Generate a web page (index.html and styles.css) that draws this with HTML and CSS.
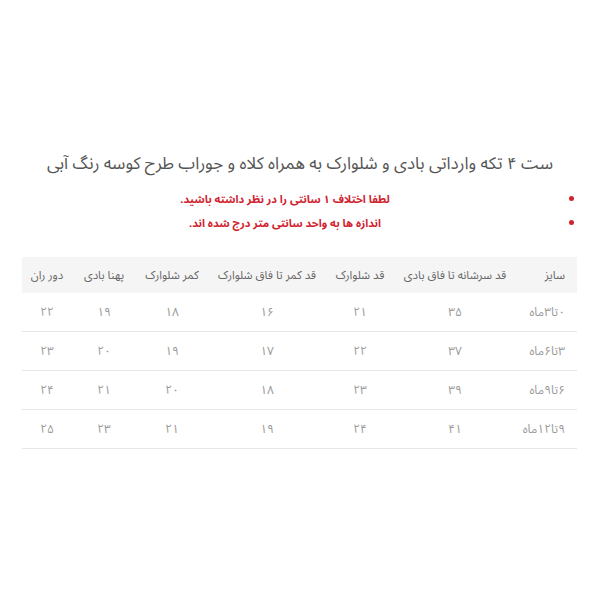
FILE: index.html
```html
<!DOCTYPE html>
<html lang="fa" dir="rtl">
<head>
<meta charset="utf-8">
<title>ست ۴ تکه</title>
<link rel="stylesheet" href="styles.css">
</head>
<body>
<div class="page">
  <h1 class="title">ست ۴ تکه وارداتی بادی و شلوارک به همراه کلاه و جوراب طرح کوسه رنگ آبی</h1>
  <ul class="notes">
    <li>لطفا اختلاف ۱ سانتی را در نظر داشته باشید.</li>
    <li>اندازه ها به واحد سانتی متر درج شده اند.</li>
  </ul>
  <table class="sizes">
    <thead>
      <tr>
        <th class="c1">سایز</th>
        <th class="c2">قد سرشانه تا فاق بادی</th>
        <th class="c3">قد شلوارک</th>
        <th class="c4">قد کمر تا فاق شلوارک</th>
        <th class="c5">کمر شلوارک</th>
        <th class="c6">پهنا بادی</th>
        <th class="c7">دور ران</th>
      </tr>
    </thead>
    <tbody>
      <tr><td class="c1">۰تا۳ماه</td><td>۳۵</td><td>۲۱</td><td>۱۶</td><td>۱۸</td><td>۱۹</td><td>۲۲</td></tr>
      <tr><td class="c1">۳تا۶ماه</td><td>۳۷</td><td>۲۲</td><td>۱۷</td><td>۱۹</td><td>۲۰</td><td>۲۳</td></tr>
      <tr><td class="c1">۶تا۹ماه</td><td>۳۹</td><td>۲۳</td><td>۱۸</td><td>۲۰</td><td>۲۱</td><td>۲۴</td></tr>
      <tr><td class="c1">۹تا۱۲ماه</td><td>۴۱</td><td>۲۴</td><td>۱۹</td><td>۲۱</td><td>۲۳</td><td>۲۵</td></tr>
    </tbody>
  </table>
</div>
</body>
</html>
```
FILE: styles.css
```css
html, body {
  margin: 0;
  padding: 0;
  background: #ffffff;
}
body {
  font-family: "Noto Sans Arabic", "DejaVu Sans", sans-serif;
  width: 600px;
  height: 600px;
}
.page {
  padding-top: 148px;
}
.title {
  margin: 0;
  font-size: 17px;
  font-weight: normal;
  color: #555555;
  text-align: center;
  line-height: 32px;
  white-space: nowrap;
}
.notes {
  margin: 8px 0 0 0;
  padding: 0 42px 0 12px;
  list-style: disc;
  color: #d0232f;
  font-size: 11px;
  font-weight: bold;
  text-align: center;
}
.notes li {
  line-height: 24px;
}
.notes li::marker {
  font-size: 10px;
}
.sizes {
  margin: 21px 23px 0 22px;
  width: 555px;
  border-collapse: collapse;
  table-layout: fixed;
  font-size: 12px;
}
.sizes th {
  background: #f5f5f5;
  color: #666666;
  font-weight: normal;
  font-size: 11.5px;
  height: 36px;
  padding: 0;
  text-align: center;
}
.sizes td {
  height: 38px;
  padding: 0;
  color: #9a9a9a;
  text-align: center;
  border-bottom: 1px solid #e6e6e6;
}
.sizes .c1 { width: 49px; text-align: right; padding-right: 12px; }
.sizes .c2 { width: 122px; }
.sizes .c3 { width: 68px; }
.sizes .c4 { width: 118px; }
.sizes .c5 { width: 72px; }
.sizes .c6 { width: 64px; }
.sizes .c7 { width: 50px; }
```
